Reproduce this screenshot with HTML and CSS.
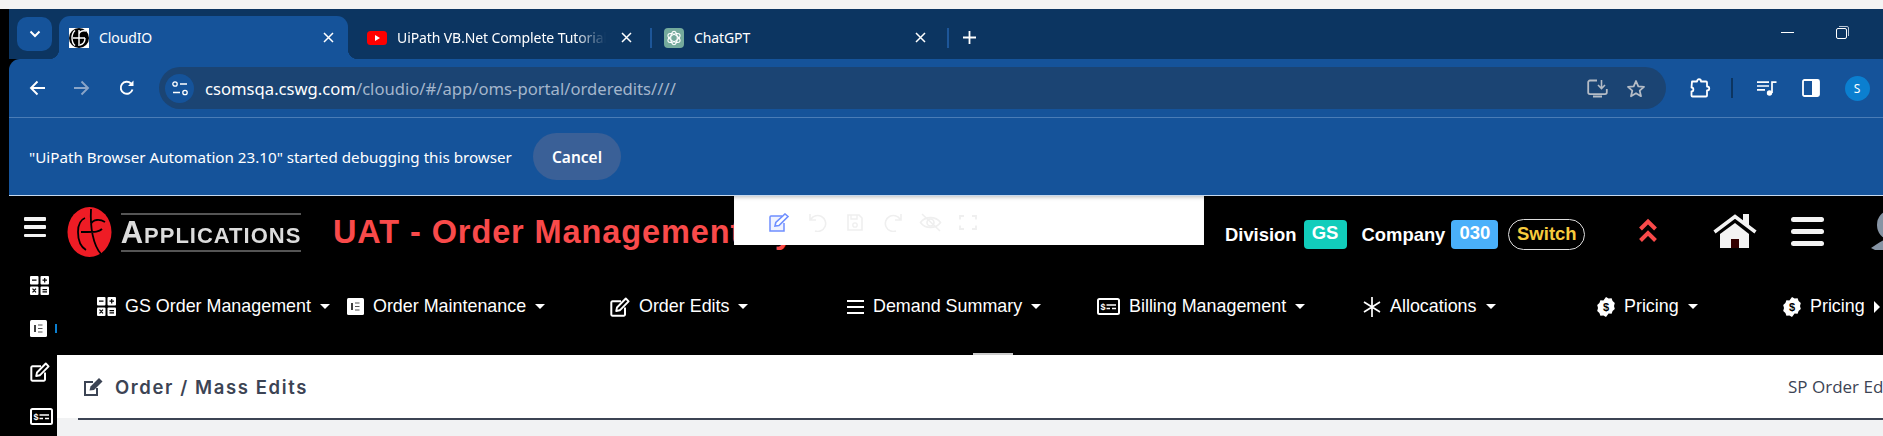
FILE: index.html
```html
<!DOCTYPE html>
<html lang="en">
<head>
<meta charset="utf-8">
<title>CloudIO</title>
<link rel="stylesheet" href="styles.css">
</head>
<body>
<svg class="defs" aria-hidden="true">
  <symbol id="i-grid" viewBox="0 0 19 19">
    <rect x="0" y="0" width="8.5" height="8.5" rx="1" fill="#fff"/><rect x="10.5" y="0" width="8.5" height="8.5" rx="1" fill="#fff"/>
    <rect x="0" y="10.5" width="8.5" height="8.5" rx="1" fill="#fff"/><rect x="10.5" y="10.5" width="8.5" height="8.5" rx="1" fill="#fff"/>
    <path d="M2 4.2h4.500M12.500 4.200h4.500M14.700 2v4.500M2.500 12.700l3.500 3.600M6 12.700l-3.500 3.600M12.500 13.600h4.500M12.500 15.800h4.500" stroke="#000" stroke-width="1.200" fill="none"/>
  </symbol>
  <symbol id="i-form" viewBox="0 0 17 17">
    <rect x="0" y="0" width="17" height="17" rx="1.500" fill="#fff"/>
    <path d="M5 5v7" stroke="#000" stroke-width="1.500"/><path d="M8 5h4.500M8 8.500h4.500M8 12h4.500" stroke="#555" stroke-width="1.200"/>
  </symbol>
  <symbol id="i-edit" viewBox="0 0 20 20">
    <path d="M15 10.500V17.500a1.200 1.200 0 0 1-1.200 1.200H2.500a1.200 1.200 0 0 1-1.200-1.200V5.500a1.200 1.200 0 0 1 1.200-1.200h8.500" fill="none" stroke="#fff" stroke-width="2"/>
    <path d="M7 10.500 15.800 1.500l2.800 2.800-8.800 9-3.600.8z" fill="none" stroke="#fff" stroke-width="1.900" stroke-linejoin="round"/>
  </symbol>
  <symbol id="i-bill" viewBox="0 0 23 17">
    <rect x="1" y="1" width="21" height="15" rx="1.500" fill="none" stroke="#fff" stroke-width="2"/>
    <text x="3.500" y="12" class="svg-dollar">$</text>
    <path d="M9.500 7h9.500M9.500 10.500h3.500M15 10.500h4" stroke="#fff" stroke-width="1.700"/>
  </symbol>
  <symbol id="i-price" viewBox="0 0 18 20">
    <path d="M9 0l2.600 1.500 3-.2 1 2.800 2.200 2-.8 2.900.8 2.900-2.200 2-1 2.800-3-.2L9 20l-2.600-1.500-3 .2-1-2.800-2.200-2 .8-2.900-.8-2.900 2.200-2 1-2.800 3 .2z" fill="#fff"/>
    <text x="9" y="14" class="svg-price">$</text>
  </symbol>
</svg>

<div class="top-strip"></div>
<div class="page">
  <div class="edge"></div>
  <div class="window">

    <div class="tabstrip">
      <button class="tab-search" aria-label="Search tabs">
        <svg width="12" height="8" viewBox="0 0 12 8"><path d="M1.500 1.500 6 6l4.500-4.500" fill="none" stroke="#fff" stroke-width="2"/></svg>
      </button>
      <div class="tab tab-active">
        <svg class="fav" width="20" height="20" viewBox="0 0 20 20"><rect width="20" height="20" fill="#fff"/><ellipse cx="10" cy="10" rx="10" ry="10" fill="#000"/><path d="M6 2.500C2 6 2 14 6 17.500M10 2v16M4 10h12M10 6c1-3 4-3.500 7-3M11 17c4-1 5-4 5-7" fill="none" stroke="#fff" stroke-width="1.400"/></svg>
        <span class="tab-title">CloudIO</span>
        <svg class="tab-x" width="11" height="11" viewBox="0 0 11 11"><path d="M1 1l9 9M10 1l-9 9" stroke="#fff" stroke-width="1.500"/></svg>
      </div>
      <div class="tab tab-yt">
        <svg class="fav" width="20" height="14" viewBox="0 0 20 14"><rect width="20" height="14" rx="3.500" fill="#f00"/><path d="M8 4l5 3-5 3z" fill="#fff"/></svg>
        <span class="tab-title tab-fade">UiPath VB.Net Complete Tutorial</span>
        <svg class="tab-x" width="11" height="11" viewBox="0 0 11 11"><path d="M1 1l9 9M10 1l-9 9" stroke="#fff" stroke-width="1.500"/></svg>
      </div>
      <div class="tab-sep"></div>
      <div class="tab tab-gpt">
        <svg class="fav" width="20" height="20" viewBox="0 0 20 20"><rect width="20" height="20" rx="4" fill="#74aa9c"/><g fill="none" stroke="#fff" stroke-width="1.100"><ellipse cx="10" cy="10" rx="3.300" ry="6.800"/><ellipse cx="10" cy="10" rx="3.300" ry="6.800" transform="rotate(60 10 10)"/><ellipse cx="10" cy="10" rx="3.300" ry="6.800" transform="rotate(120 10 10)"/></g></svg>
        <span class="tab-title">ChatGPT</span>
        <svg class="tab-x" width="11" height="11" viewBox="0 0 11 11"><path d="M1 1l9 9M10 1l-9 9" stroke="#fff" stroke-width="1.500"/></svg>
      </div>
      <div class="tab-sep"></div>
      <svg class="new-tab" width="13" height="13" viewBox="0 0 13 13"><path d="M6.500 0v13M0 6.500h13" stroke="#fff" stroke-width="1.800"/></svg>
      <div class="win-controls">
        <svg width="13" height="1" viewBox="0 0 13 1"><path d="M0 .5h13" stroke="#fff"/></svg>
        <svg width="13" height="13" viewBox="0 0 13 13"><rect x=".5" y="2.500" width="10" height="10" rx="1.500" fill="none" stroke="#fff"/><path d="M3 .5h8a1.500 1.500 0 0 1 1.500 1.500v8" fill="none" stroke="#b9c6d6"/></svg>
      </div>
    </div>

    <div class="toolbar">
      <svg class="nav-btn" width="17" height="16" viewBox="0 0 17 16"><path d="M16 8H2M8.500 1.500 2 8l6.500 6.500" fill="none" stroke="#fff" stroke-width="1.900"/></svg>
      <svg class="nav-btn nav-fwd" width="17" height="16" viewBox="0 0 17 16"><path d="M1 8h14M8.500 1.500 15 8l-6.500 6.500" fill="none" stroke="#8aa5c8" stroke-width="1.900"/></svg>
      <svg class="nav-btn nav-reload" width="16" height="16" viewBox="0 0 16 16"><path d="M13.500 9.500A6 6 0 1 1 12 3.500" fill="none" stroke="#fff" stroke-width="1.900"/><path d="M14.500 0.500V6H9z" fill="#fff"/></svg>
      <div class="omnibox">
        <span class="tune">
          <svg width="16" height="15" viewBox="0 0 16 15"><circle cx="3" cy="3" r="2.200" fill="none" stroke="#fff" stroke-width="1.300"/><path d="M8 3h7M1 11.500h7" stroke="#fff" stroke-width="1.500"/><circle cx="13" cy="11.500" r="2.200" fill="none" stroke="#fff" stroke-width="1.300"/></svg>
        </span>
        <span class="url"><span class="url-host">csomsqa.cswg.com</span>/cloudio/#/app/oms-portal/orderedits////</span>
        <svg class="omni-install" width="21" height="19" viewBox="0 0 21 19"><path d="M10 1.500H3A1.800 1.800 0 0 0 1.200 3.300v10a1.800 1.800 0 0 0 1.800 1.800h15a1.800 1.800 0 0 0 1.800-1.800V10" fill="none" stroke="#b5bcc6" stroke-width="1.800"/><path d="M6 16.500h9v2H6z" fill="#b5bcc6"/><path d="M14.500 1v8M11 6l3.500 3.500L18 6" fill="none" stroke="#b5bcc6" stroke-width="1.600"/></svg>
        <svg class="omni-star" width="20" height="19" viewBox="0 0 20 19"><path d="M10 2l2.300 5.300 5.700.5-4.300 3.800 1.300 5.600L10 14.200 5 17.200l1.300-5.600L2 7.800l5.700-.5z" fill="none" stroke="#b5bcc6" stroke-width="1.800" stroke-linejoin="round"/></svg>
      </div>
      <svg class="tool-ext" width="21" height="20" viewBox="0 0 21 20"><path d="M2 3.500h5c0-3 4-3 4 0h5a1 1 0 0 1 1 1v4c3 0 3 4 0 4v5a1 1 0 0 1-1 1H2.500a1 1 0 0 1-1-1v-4c2.500 0 2.500-4 0-4z" fill="none" stroke="#fff" stroke-width="1.800" stroke-linejoin="round"/></svg>
      <div class="tool-sep"></div>
      <svg class="tool-music" width="20" height="15" viewBox="0 0 20 15"><path d="M0 1.200h12M0 5h12M0 8.800h8" stroke="#fff" stroke-width="1.700"/><circle cx="12.500" cy="12" r="2.700" fill="#fff"/><path d="M15 12V1.200h4.500" fill="none" stroke="#fff" stroke-width="1.700"/></svg>
      <svg class="tool-side" width="18" height="18" viewBox="0 0 18 18"><rect x="1" y="1" width="16" height="16" rx="1.500" fill="none" stroke="#fff" stroke-width="1.800"/><rect x="10" y="1" width="7" height="16" fill="#fff"/></svg>
      <span class="tool-avatar">S</span>
    </div>

    <div class="infobar">
      <span class="info-text">"UiPath Browser Automation 23.10" started debugging this browser</span>
      <button class="info-cancel">Cancel</button>
    </div>

    <div class="app">
      <div class="app-head">
        <span class="burger"><i></i><i></i><i></i></span>
        <svg class="logo-mark" width="45" height="50" viewBox="0 0 45 50"><ellipse cx="22.500" cy="25" rx="22" ry="25" fill="#ee1c25"/><path d="M18 11c-5 2-7 8-7 14 0 9 3 15 8 18M14 25h6c8 0 12 0 15-3M38 15c-5-3-12-3-14 2M24 2c-1 18 2 36 10 45" fill="none" stroke="#000" stroke-width="1.800"/></svg>
        <div class="logo-word"><span class="logo-text">Applications</span></div>
        <div class="app-title">UAT - Order Management System</div>
        <div class="head-right">
          <span class="lbl">Division</span><span class="badge badge-gs">GS</span>
          <span class="lbl lbl-co">Company</span><span class="badge badge-co">030</span>
          <span class="switch">Switch</span>
          <svg class="chev" width="20" height="25" viewBox="0 0 20 25"><path d="M2.500 11 10 3.500l7.500 7.500M2.500 22.500 10 15l7.500 7.500" fill="none" stroke="#f94a4a" stroke-width="4"/></svg>
          <svg class="home" width="44" height="34" viewBox="0 0 44 34"><path d="M7 20 22 9l14 11v14H7z" fill="#f3f3f3"/><path d="M18 25h8v9h-8z" fill="#300"/><path d="M1.500 18 22 2.500 42.500 18" fill="none" stroke="#f3f3f3" stroke-width="3.500"/><path d="M30 0h6v11h-6z" fill="#f3f3f3"/></svg>
          <span class="burger burger-lg"><i></i><i></i><i></i></span>
          <svg class="person" width="28" height="40" viewBox="0 0 28 40"><ellipse cx="18" cy="15" rx="12" ry="14" fill="#8794a4"/><path d="M0 38c5-3 12-9 18-9s10 4 10 11H4z" fill="#8794a4"/></svg>
        </div>
        <div class="edit-panel">
          <svg class="pi pi-edit" width="21" height="19" viewBox="0 0 21 19"><path d="M13 3H2a1 1 0 0 0-1 1v14h14V10" fill="#f0f3ff" stroke="#6f8fff" stroke-width="1.500"/><path d="M6 13l.8-3.500L16 1l3 2.500-9 9z" fill="#fff" stroke="#6f8fff" stroke-width="1.600"/></svg>
          <svg class="pi pi-undo" width="19" height="19" viewBox="0 0 19 19"><path d="M2 1v6h6M3 6a8 8 0 1 1 4 12" fill="none" stroke="#efefef" stroke-width="1.600"/></svg>
          <svg class="pi pi-save" width="16" height="17" viewBox="0 0 16 17"><path d="M1 1h11l3 3v12H1z" fill="none" stroke="#efefef" stroke-width="1.600"/><path d="M4 1v4h6V1" fill="none" stroke="#efefef" stroke-width="1.300"/><circle cx="8" cy="11" r="2.200" fill="none" stroke="#efefef" stroke-width="1.300"/></svg>
          <svg class="pi pi-redo" width="19" height="19" viewBox="0 0 19 19"><path d="M17 1v6h-6M16 6a8 8 0 1 0-4 12" fill="none" stroke="#efefef" stroke-width="1.600"/></svg>
          <svg class="pi pi-eye" width="23" height="19" viewBox="0 0 23 19"><path d="M1.500 9.500C6 3 17 3 21.500 9.500 17 16 6 16 1.500 9.500z" fill="none" stroke="#efefef" stroke-width="1.600"/><circle cx="11.500" cy="9.500" r="3.500" fill="none" stroke="#efefef" stroke-width="1.600"/><path d="M3 1l18 17" stroke="#efefef" stroke-width="1.600"/></svg>
          <svg class="pi" width="18" height="15" viewBox="0 0 18 15"><path d="M1 4.500V1h4M13 1h4v3.500M17 10.500V14h-4M5 14H1v-3.500" fill="none" stroke="#efefef" stroke-width="1.800"/></svg>
        </div>
      </div>

      <div class="app-body">
        <aside class="side">
          <svg class="si" width="19" height="19"><use href="#i-grid"/></svg>
          <svg class="si si-form" width="17" height="17"><use href="#i-form"/></svg>
          <svg class="si si-edit" width="20" height="20"><use href="#i-edit"/></svg>
          <svg class="si si-bill" width="23" height="17"><use href="#i-bill"/></svg>
          <span class="side-dot"></span>
        </aside>
        <div class="main">
          <nav class="menu">
            <div class="mi"><svg width="19" height="19"><use href="#i-grid"/></svg><span>GS Order Management</span><i class="caret"></i></div>
            <div class="mi"><svg width="17" height="17"><use href="#i-form"/></svg><span>Order Maintenance</span><i class="caret"></i></div>
            <div class="mi"><svg width="20" height="20"><use href="#i-edit"/></svg><span>Order Edits</span><i class="caret"></i></div>
            <div class="mi"><svg width="17" height="16" viewBox="0 0 17 16"><path d="M0 2h17M0 8h17M0 14h17" stroke="#fff" stroke-width="2.200"/></svg><span>Demand Summary</span><i class="caret"></i></div>
            <div class="mi"><svg width="23" height="17"><use href="#i-bill"/></svg><span>Billing Management</span><i class="caret"></i></div>
            <div class="mi"><svg width="18" height="20" viewBox="0 0 18 20"><path d="M9 0v20M1 5l16 10M17 5 1 15" stroke="#fff" stroke-width="1.700"/></svg><span>Allocations</span><i class="caret"></i></div>
            <div class="mi"><svg width="18" height="20"><use href="#i-price"/></svg><span>Pricing</span><i class="caret"></i></div>
            <div class="mi"><svg width="18" height="20"><use href="#i-price"/></svg><span>Pricing</span><i class="caret caret-right"></i></div>
          </nav>
          <div class="thumb-row"><div class="thumb"></div></div>
          <section class="content">
            <div class="content-head">
              <svg class="ch-icon" width="21" height="20" viewBox="0 0 21 20"><path d="M14 11v7H2V5h8" fill="none" stroke="#3c4454" stroke-width="2"/><path d="M6.500 13.500l1-4L16 1l3.500 3.500L11 13z" fill="#3c4454"/></svg>
              <h1 class="ch-title">Order / Mass Edits</h1>
              <span class="ch-crumb">SP Order Edits</span>
            </div>
            <div class="ch-rule"></div>
          </section>
        </div>
      </div>
    </div>
  </div>
</div>
</body>
</html>
```
FILE: styles.css
```css
* { box-sizing: border-box; }
html, body { margin: 0; padding: 0; width: 1883px; height: 436px; overflow: hidden; background: #000; }
body { font-family: "Liberation Sans", Arial, sans-serif; }
.defs { display: none; }
.svg-dollar { font: bold 9px "Liberation Sans", sans-serif; fill: #fff; }
.svg-price { font: bold 11px "Liberation Sans", sans-serif; fill: #000; text-anchor: middle; }

.top-strip { height: 9px; background: #f3f3f3; }
.page { display: flex; height: 427px; }
.edge { width: 9px; background: #000; flex: none; }
.window { width: 1874px; flex: none; overflow: hidden; }

/* tab strip */
.tabstrip { height: 50px; background: #0c3561; display: flex; align-items: flex-end; position: relative; font-family: "Noto Sans", sans-serif; }
.tab-search { width: 35px; height: 34px; margin: 0 7px 8px 8px; border: 0; border-radius: 10px; background: #15539a; display: flex; align-items: center; justify-content: center; padding: 0; }
.tab { height: 43px; display: flex; align-items: center; color: #fff; font-size: 14px; position: relative; flex: none; }
.tab-active { width: 289px; background: #15539a; border-radius: 11px 11px 0 0; padding-left: 10px; }
.tab-active::before, .tab-active::after { content: ""; position: absolute; bottom: 0; width: 10px; height: 10px; }
.tab-active::after { right: -10px; background: radial-gradient(circle at 100% 0, transparent 10px, #15539a 10.500px); }
.tab-active::before { left: -10px; background: radial-gradient(circle at 0 0, transparent 10px, #15539a 10.500px); }
.tab-yt { width: 302px; padding-left: 19px; }
.tab-gpt { width: 295px; padding-left: 12px; }
.fav { flex: none; }
.tab-title { margin-left: 10px; white-space: nowrap; overflow: hidden; width: 209px; flex: none; letter-spacing: -.1px; }
.tab-active .tab-title { width: 224px; }
.tab-fade { -webkit-mask-image: linear-gradient(90deg, #000 85%, transparent); mask-image: linear-gradient(90deg, #000 85%, transparent); }
.tab-gpt .tab-title { width: 216px; }
.tab-x { margin-left: 15px; flex: none; }
.tab-active .tab-x { margin-left: 0; }
.tab-gpt .tab-x { margin-left: 5px; }
.tab-sep { width: 2px; height: 20px; background: #1d5699; margin-bottom: 11px; flex: none; }
.new-tab { margin: 0 0 15px 14px; flex: none; }
.win-controls { margin-left: auto; height: 100%; display: flex; align-items: center; gap: 42px; padding: 0 34px 4px 0; }

/* toolbar */
.toolbar { height: 59px; background: #15539a; border-top-left-radius: 11px; border-bottom: 1px solid #4a7cb6; display: flex; align-items: center; padding: 0 0 0 20px; position: relative; }
.nav-btn { flex: none; }
.nav-fwd { margin-left: 27px; }
.nav-reload { margin-left: 29px; }
.omnibox { width: 1507px; height: 42px; margin-left: 24px; border-radius: 21px; background: #1b4473; display: flex; align-items: center; padding-left: 6px; font-family: "Noto Sans", sans-serif; flex: none; }
.tune { width: 29px; height: 29px; border-radius: 50%; background: #15539a; display: flex; align-items: center; justify-content: center; flex: none; }
.url { margin-left: 11px; font-size: 16.650px; color: #a4b6cc; white-space: nowrap; width: 1381.500px; flex: none; }
.url-host { color: #fff; }
.omni-install { flex: none; }
.omni-star { margin-left: 18.500px; flex: none; }
.tool-ext { margin-left: 23.500px; flex: none; }
.tool-sep { width: 2px; height: 20px; background: #0c3561; margin-left: 20.500px; flex: none; }
.tool-music { margin-left: 24px; flex: none; }
.tool-side { margin-left: 25px; flex: none; }
.tool-avatar { width: 25px; height: 25px; border-radius: 50%; background: #0b7fd0; color: #fff; font: 12px "Noto Sans", sans-serif; display: flex; align-items: center; justify-content: center; margin-left: 24.500px; flex: none; }

/* infobar */
.infobar { height: 78px; background: #15539a; border-bottom: 1px solid #c5d8ee; display: flex; align-items: center; padding-left: 20px; font-family: "Noto Sans", sans-serif; }
.info-text { color: #fff; font-size: 15.200px; white-space: nowrap; width: 484px; flex: none; }
.info-cancel { width: 88px; height: 47px; margin-left: 20px; border: 0; border-radius: 24px; background: #3a6097; color: #fff; font: 600 15.500px "Noto Sans", sans-serif; padding: 0; }

/* app header */
.app { background: #000; height: 240px; position: relative; overflow: hidden; }
.app-head { height: 66px; display: flex; align-items: center; padding-left: 15px; }
.burger { display: flex; flex-direction: column; justify-content: space-between; width: 22px; height: 20px; flex: none; margin-bottom: 4px; }
.burger i { display: block; height: 3.500px; background: #f3f3f3; border-radius: 1px; }
.logo-mark { margin-left: 21px; margin-top: 6px; flex: none; }
.logo-word { margin-left: 9px; margin-top: 7px; width: 180px; height: 39px; border-top: 2px solid #555; border-bottom: 2px solid #555; display: flex; align-items: center; justify-content: center; flex: none; }
.logo-text { font-variant: small-caps; font-weight: bold; font-size: 31px; color: #dcdcdc; letter-spacing: 1px; white-space: nowrap; filter: blur(.5px); }
.app-title { margin-left: 32px; margin-top: 6px; width: 892px; flex: none; font-size: 32.500px; letter-spacing: .9px; font-weight: bold; color: #f94a4a; white-space: nowrap; }
.head-right { display: flex; align-items: center; flex: none; margin-top: 11px; white-space: nowrap; }
.lbl { color: #fff; font-weight: bold; font-size: 18.400px; }
.lbl-co { margin-left: 15px; }
.badge { height: 29px; border-radius: 4px; color: #fff; font-weight: bold; font-size: 18.500px; display: flex; align-items: center; justify-content: center; margin-left: 7px; padding-bottom: 3px; }
.badge-gs { width: 43px; background: #11cdbb; }
.badge-co { width: 47px; background: #4ab0fa; margin-left: 6px; }
.switch { width: 77px; height: 31px; margin-left: 10px; border: 1px solid #ddd; border-radius: 16px; color: #f7cb3d; font-weight: bold; font-size: 18.500px; display: flex; align-items: center; justify-content: center; padding-bottom: 2px; }
.chev { margin-left: 53px; flex: none; margin-top: -8px; }
.home { margin-left: 55px; flex: none; margin-top: -7px; }
.burger-lg { width: 33px; height: 29px; margin-left: 34px; margin-bottom: 0; margin-top: -7px; }
.burger-lg i { height: 5px; border-radius: 2.500px; }
.person { margin-left: 47px; flex: none; margin-top: -9px; }

/* floating edit toolbar */
.edit-panel { position: absolute; left: 725px; top: 0; width: 470px; height: 49px; background: #fff; box-shadow: inset 0 4px 4px -3px #bbb; display: flex; align-items: center; padding: 3px 0 0 35px; }
.pi { flex: none; }
.pi-edit { margin-right: 18px; }
.pi-undo { margin-right: 20px; }
.pi-save { margin-right: 21px; }
.pi-redo { margin-right: 16px; }
.pi-eye { margin-right: 17px; }

/* body */
.app-body { display: flex; height: 174px; }
.side { width: 48px; flex: none; display: flex; flex-direction: column; align-items: flex-start; padding: 14px 0 0 21px; }
.si { flex: none; }
.si-form { margin-top: 25px; }
.si-edit { margin-top: 25px; }
.si-bill { margin-top: 26px; }
.side-dot { position: absolute; left: 46px; top: 128px; width: 2px; height: 9px; background: #0b7fd0; }
.main { flex: 1; min-width: 0; overflow: hidden; }
.menu { height: 91px; display: grid; grid-template-columns: 250px 263px 237px 250px 266px 234px 186px 100px; padding: 0 0 2px 40px; align-items: center; color: #fff; font-size: 17.900px; white-space: nowrap; }
.mi { display: flex; align-items: center; }
.mi svg { flex: none; }
.mi span { margin-left: 9px; }
.caret { width: 0; height: 0; border: 5px solid transparent; border-top-color: #fff; border-bottom: 0; margin-left: 9px; }
.caret-right { border: 6px solid transparent; border-left-color: #fff; border-right: 0; }
.thumb-row { height: 2px; padding-left: 916px; }
.thumb { width: 40px; height: 2px; background: #ccc; }
.content { background: #f1f2f3; height: 81px; }
.content-head { height: 63px; background: #fff; display: flex; align-items: center; padding-left: 26px; }
.ch-icon { flex: none; }
.ch-title { margin: 0 0 0 11px; font: 600 18.500px Inter, "Open Sans", sans-serif; letter-spacing: 1.600px; color: #3c4454; white-space: nowrap; }
.ch-crumb { position: absolute; left: 1779px; font: 17px "Open Sans", sans-serif; color: #3c4454; white-space: nowrap; }
.ch-rule { height: 1.500px; background: #3c4454; margin-left: 21px; }
```
